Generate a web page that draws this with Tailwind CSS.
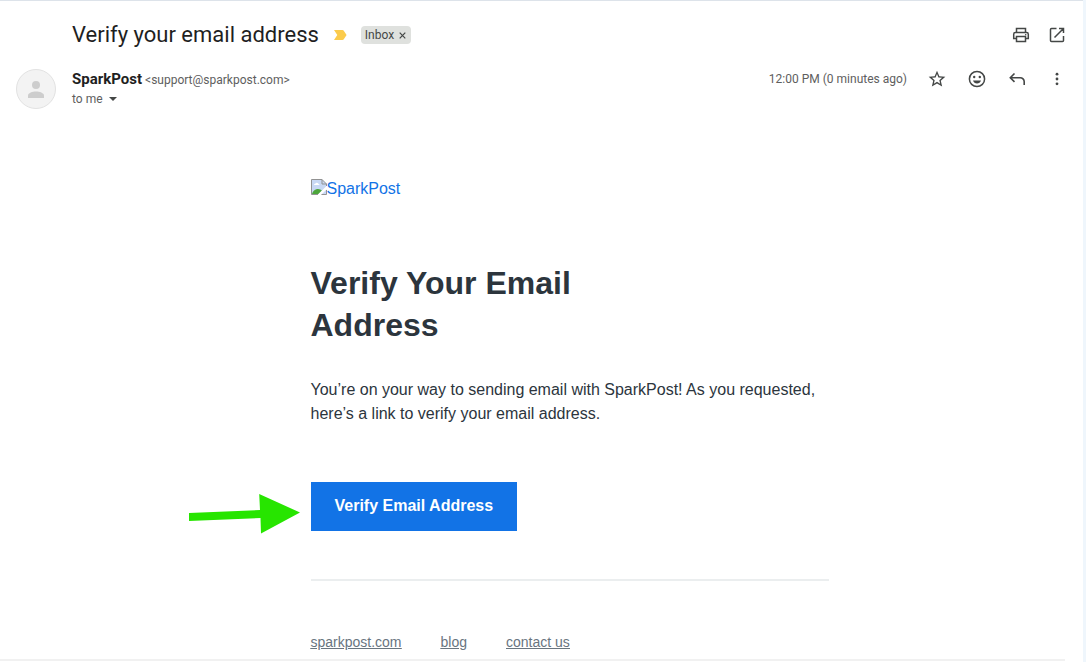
<!DOCTYPE html>
<html lang="en">
<head>
<meta charset="utf-8">
<meta name="viewport" content="width=device-width, initial-scale=1">
<title>Verify your email address</title>
<script src="https://cdn.jsdelivr.net/npm/@tailwindcss/browser@4"></script>
</head>
<body class="bg-[#eff6fc] pr-[3px] font-['Roboto','Liberation_Sans',sans-serif] text-[#1f1f1f]">
<main class="min-h-screen overflow-hidden border-t border-[#dde3ea] bg-white">
  <header class="flex items-center pt-4 pr-4 pl-[72px]">
    <h1 class="text-[22px] leading-9">Verify your email address</h1>
    <button class="ml-3.5 flex size-4 items-center justify-center" aria-label="Important">
      <svg class="h-[10px] w-[13px]" viewBox="0 0 13 10"><path fill="#fbcb4c" d="M0 0h8.500q.8 0 1.300.7L12.600 5 9.800 9.300q-.5.7-1.300.7H0l3.300-5z"/></svg>
    </button>
    <div class="ml-3 flex h-[18px] items-center rounded bg-[#dfe1de] text-xs text-[#444746]">
      <span class="pl-1">Inbox</span>
      <button class="flex h-[18px] w-[17px] items-center justify-center" aria-label="Remove label Inbox">
        <svg class="size-[7px]" viewBox="0 0 7 7"><path d="M.7.7l5.600 5.600M6.300.7L.7 6.300" stroke="#444746" stroke-width="1.200"/></svg>
      </button>
    </div>
    <div class="ml-auto flex gap-4">
      <button class="size-5" aria-label="Print all">
        <svg viewBox="0 0 20 20" fill="none" stroke="#444746" stroke-width="1.500"><path d="M5.500 7V3.500h9V7M5.500 13.500H2.700V9.200q0-1.700 1.700-1.700h11.200q1.700 0 1.700 1.700v4.300h-2.800M5.500 11.500h9v5h-9z"/><circle cx="14.700" cy="9.800" r=".8" fill="#444746" stroke="none"/></svg>
      </button>
      <button class="size-5" aria-label="In new window">
        <svg viewBox="0 0 20 20" fill="none" stroke="#444746" stroke-width="1.500"><path d="M9.500 3.500H4.500q-1 0-1 1v11q0 1 1 1h11q1 0 1-1V11M12 3.500h4.500V8M16.500 3.500L7.500 12.500"/></svg>
      </button>
    </div>
  </header>

  <section class="flex items-start pt-4 pr-4 pl-4">
    <div class="mr-4 flex size-10 shrink-0 items-center justify-center rounded-full border border-[#e2e2e2] bg-[#f3f3f3]">
      <svg class="h-[17px] w-4" viewBox="0 0 16 17" fill="#cdcdcd"><circle cx="8" cy="4" r="4"/><path d="M0 17v-2.500C0 12 4.500 10.500 8 10.500s8 1.500 8 4V17z"/></svg>
    </div>
    <div>
      <p class="flex h-5 items-baseline gap-[3px] text-xs leading-5 text-[#5e5e5e]"><b class="text-[15px] leading-5 text-[#1f1f1f]">SparkPost</b> <span>&lt;support@sparkpost.com&gt;</span></p>
      <button class="flex items-center gap-[6px] text-xs leading-5 text-[#5e5e5e]">to me
        <svg class="h-1 w-2" viewBox="0 0 8 4"><path fill="#444746" d="M0 0h8L4 4z"/></svg>
      </button>
    </div>
    <div class="ml-auto flex h-5 items-center gap-5">
      <time class="text-xs text-[#5e5e5e]">12:00 PM (0 minutes ago)</time>
      <button class="size-5" aria-label="Not starred">
        <svg viewBox="0 0 24 24" fill="#444746"><path d="M22 9.240l-7.190-.62L12 2 9.190 8.630 2 9.240l5.460 4.730L5.820 21 12 17.270 18.180 21l-1.630-7.030L22 9.240zM12 15.400l-3.760 2.270 1-4.280-3.320-2.880 4.380-.38L12 6.100l1.710 4.040 4.380.38-3.320 2.880 1 4.280L12 15.400z"/></svg>
      </button>
      <button class="size-5" aria-label="Add reaction">
        <svg viewBox="0 0 20 20" fill="#444746"><circle cx="10" cy="10" r="7.600" fill="none" stroke="#444746" stroke-width="1.500"/><circle cx="7.200" cy="8" r="1.200"/><circle cx="12.800" cy="8" r="1.200"/><path d="M6 11.500h8c-.6 1.800-2.100 3-4 3s-3.400-1.200-4-3z"/></svg>
      </button>
      <button class="size-5" aria-label="Reply">
        <svg viewBox="0 0 20 20" fill="none" stroke="#444746" stroke-width="1.600"><path d="M7.500 4.500L3.300 8.700l4.200 4.200M3.500 8.700h9.700a4 4 0 0 1 4 4V16"/></svg>
      </button>
      <button class="size-5" aria-label="More">
        <svg viewBox="0 0 20 20" fill="#444746"><circle cx="10" cy="5.200" r="1.400"/><circle cx="10" cy="10" r="1.400"/><circle cx="10" cy="14.800" r="1.400"/></svg>
      </button>
    </div>
  </section>

  <article class="pt-[68px] pr-4 pl-[72px] font-['Liberation_Sans',Arial,sans-serif] text-[#2c353d]">
    <div class="mx-auto max-w-[518px]">
      <a href="#" class="flex items-start text-base leading-6 text-[#1273e6]">
        <svg class="mt-[2px] size-4" viewBox="0 0 16 16"><path fill="#c8d8f4" d="M.5.5H11L15.500 5v10.500H.5z"/><path fill="#fff" d="M3 6q0-1.500 1.500-1.500Q5 3.500 6 3.800 7.500 4 7.500 5 8.500 5 8.500 6z"/><path fill="#4da63b" d="M1 15q1-4 5-5 3-.5 5 1.500L7.500 15z"/><path fill="#fff" d="M6.500 16L16 6.500V10l-6 6z"/><path fill="none" stroke="#929292" d="M7 15.500H.5V.5H11L15.500 5v2M11 .5V5h4.500M10.500 15.500h5V11"/></svg>
        <span>SparkPost</span>
      </a>
      <h2 class="mt-[61px] text-[32px] leading-[42px] font-bold">Verify Your Email<br>Address</h2>
      <p class="mt-8 text-base leading-6">You’re on your way to sending email with SparkPost! As you requested, here’s a link to verify your email address.</p>
      <div class="relative mt-14 w-fit">
        <svg class="absolute top-3 -left-[122px] h-10 w-[112px]" viewBox="0 0 112 40" aria-hidden="true"><path fill="#27e500" d="M0 19l71-3-.8-16L111 18.500 72 39.500 71.500 24 0 27z"/></svg>
        <a href="#" class="block bg-[#1273e6] px-6 pt-3 pb-[13px] text-base leading-6 font-bold text-white">Verify Email Address</a>
      </div>
      <hr class="mt-12 border-t-2 border-[#ebeeef]">
      <nav class="mt-[51px] flex gap-[39px] pb-[7px] text-sm leading-5 text-[#69757f] underline">
        <a href="#">sparkpost.com</a>
        <a href="#">blog</a>
        <a href="#">contact us</a>
      </nav>
    </div>
  </article>
  <hr class="mr-[18px] border-t-2 border-[#f1f1f1]">
</main>
</body>
</html>
